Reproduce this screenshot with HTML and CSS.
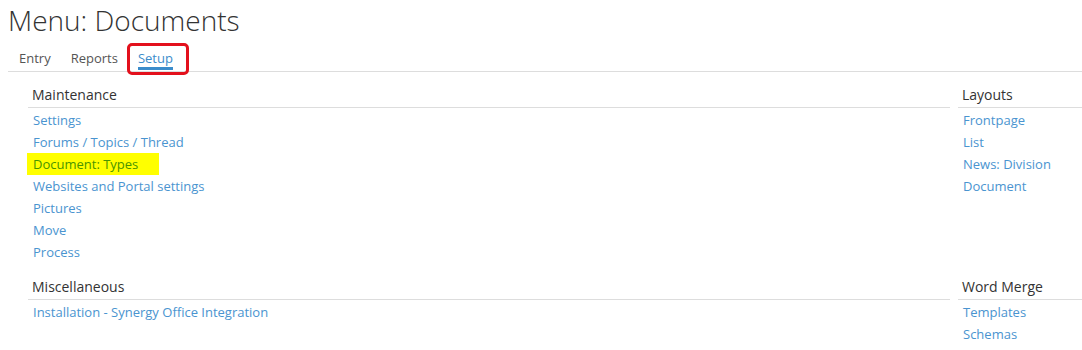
FILE: index.html
```html
<!DOCTYPE html>
<html>
<head>
<meta charset="utf-8">
<link rel="stylesheet" href="styles.css">
</head>
<body>
<h1 class="title">Menu: Documents</h1>
<nav class="tabs">
  <a class="tab">Entry</a>
  <a class="tab">Reports</a>
  <a class="tab active">Setup<span class="mark"></span></a>
</nav>
<div class="grid">
  <section class="group">
    <h2 class="group-title">Maintenance</h2>
    <ul class="links">
      <li><a>Settings</a></li>
      <li><a>Forums / Topics / Thread</a></li>
      <li><a class="hl">Document: Types</a></li>
      <li><a>Websites and Portal settings</a></li>
      <li><a>Pictures</a></li>
      <li><a>Move</a></li>
      <li><a>Process</a></li>
    </ul>
  </section>
  <section class="group">
    <h2 class="group-title">Layouts</h2>
    <ul class="links">
      <li><a>Frontpage</a></li>
      <li><a>List</a></li>
      <li><a>News: Division</a></li>
      <li><a>Document</a></li>
    </ul>
  </section>
  <section class="group">
    <h2 class="group-title">Miscellaneous</h2>
    <ul class="links">
      <li><a>Installation - Synergy Office Integration</a></li>
    </ul>
  </section>
  <section class="group">
    <h2 class="group-title">Word Merge</h2>
    <ul class="links">
      <li><a>Templates</a></li>
      <li><a>Schemas</a></li>
    </ul>
  </section>
</div>
</body>
</html>
```
FILE: styles.css
```css
html, body {
  margin: 0;
  background: #fff;
  overflow: hidden;
}
body {
  padding-left: 8px;
  font-family: "Open Sans", "Liberation Sans", sans-serif;
  color: #333;
}
.title {
  margin: 0;
  padding-top: 3px;
  font-size: 28px;
  font-weight: 300;
  line-height: 34px;
  color: #333;
}
.tabs {
  display: flex;
  margin-top: 12px;
  border-bottom: 1px solid #ddd;
}
.tab {
  position: relative;
  padding: 0 10px;
  font-size: 13px;
  line-height: 18px;
  color: #555;
  border-bottom: 3px solid transparent;
  margin-bottom: 1px;
}
.tab:first-child {
  padding-left: 11px;
}
.tab.active {
  color: #3b8ccb;
}
.tab.active::after {
  content: "";
  position: absolute;
  left: 10px;
  right: 10px;
  bottom: -3px;
  height: 3px;
  background: #3b8ccb;
}
.mark {
  position: absolute;
  left: -1px;
  right: -6px;
  top: -6px;
  bottom: -8px;
  border: 3px solid #e3101c;
  border-radius: 5px;
}
.grid {
  display: grid;
  grid-template-columns: 1fr 124px;
  column-gap: 8px;
  row-gap: 14px;
  padding-left: 20px;
  margin-top: 13px;
}
.group-title {
  margin: 0;
  padding: 0 0 2px 4px;
  font-size: 14px;
  font-weight: 400;
  line-height: 20px;
  color: #333;
  border-bottom: 1px solid #ddd;
}
.links {
  list-style: none;
  margin: 1px 0 0;
  padding: 0;
}
.links li {
  padding-left: 5px;
  font-size: 13px;
  line-height: 22px;
}
.links a {
  color: #4a94d0;
}
.links a.hl {
  display: inline-block;
  margin-left: -6px;
  padding: 0 21px 0 6px;
  background: #ffff00;
  color: #4a9400;
}
```
